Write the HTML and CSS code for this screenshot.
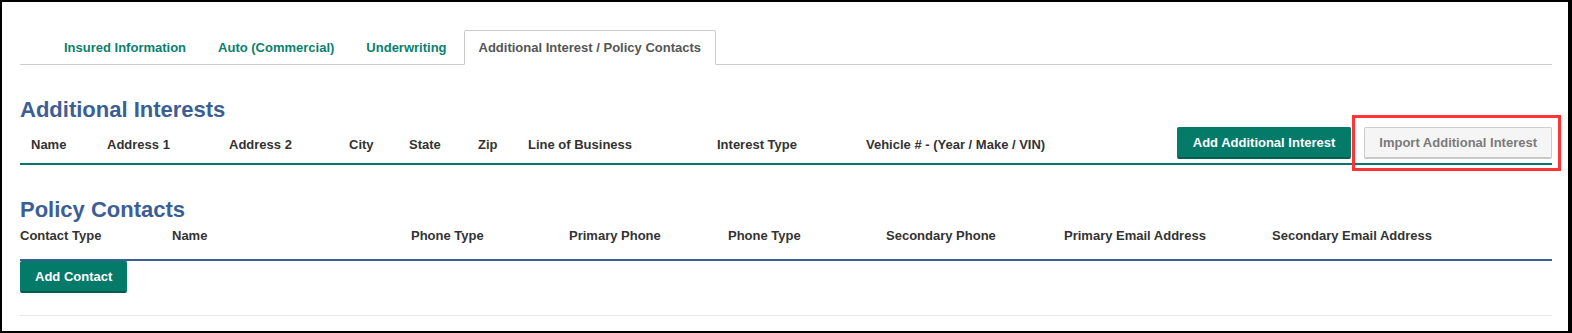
FILE: index.html
```html
<!DOCTYPE html>
<html>
<head>
<meta charset="utf-8">
<link rel="stylesheet" href="styles.css">
</head>
<body>
<div class="frame">
  <div class="tabs">
    <div class="tab">Insured Information</div>
    <div class="tab">Auto (Commercial)</div>
    <div class="tab">Underwriting</div>
    <div class="tab active">Additional Interest / Policy Contacts</div>
  </div>

  <h2 class="section-title">Additional Interests</h2>
  <div class="interest-row">
    <div class="interest-cols">
      <span>Name</span>
      <span>Address 1</span>
      <span>Address 2</span>
      <span>City</span>
      <span>State</span>
      <span>Zip</span>
      <span>Line of Business</span>
      <span>Interest Type</span>
      <span>Vehicle # - (Year / Make / VIN)</span>
    </div>
    <div class="actions">
      <button class="btn btn-green btn-add">Add Additional Interest</button>
      <button class="btn btn-light">Import Additional Interest</button>
    </div>
  </div>

  <h2 class="section-title contacts-title">Policy Contacts</h2>
  <div class="contact-row">
    <span>Contact Type</span>
    <span>Name</span>
    <span>Phone Type</span>
    <span>Primary Phone</span>
    <span>Phone Type</span>
    <span>Secondary Phone</span>
    <span>Primary Email Address</span>
    <span>Secondary Email Address</span>
  </div>
  <button class="btn btn-green btn-contact">Add Contact</button>
  <div class="bottom-rule"></div>

  <div class="highlight"></div>
</div>
</body>
</html>
```

FILE: styles.css
```css
html, body {
  margin: 0;
  padding: 0;
  background: #fff;
}

.frame {
  position: relative;
  box-sizing: border-box;
  width: 1572px;
  height: 333px;
  border-style: solid;
  border-color: #000;
  border-width: 2px 4px 2px 2px;
  padding: 0 16px 0 18px;
  font-family: "Liberation Sans", Arial, sans-serif;
  font-size: 13px;
  color: #333;
  overflow: hidden;
}

.tabs {
  display: flex;
  margin-top: 28px;
  padding-left: 29px;
  border-bottom: 1px solid #ccc;
}

.tab {
  padding: 8px 14px;
  line-height: 17px;
  border: 1px solid transparent;
  border-radius: 2px 2px 0 0;
  margin-right: 2px;
  margin-bottom: -1px;
  font-weight: bold;
  color: #0a7f6c;
}

.tab.active {
  color: #555;
  border-color: #ccc;
  border-bottom-color: #fff;
  background: #fff;
}

.section-title {
  margin: 33px 0 0 0;
  font-size: 22px;
  line-height: 24px;
  font-weight: bold;
  color: #3b5e96;
}

.interest-row {
  display: flex;
  align-items: center;
  justify-content: space-between;
  margin-top: 5px;
  padding-bottom: 4px;
  border-bottom: 2px solid #07776a;
}

.interest-cols {
  display: grid;
  grid-template-columns: 76px 122px 120px 60px 69px 50px 189px 149px auto;
  padding-left: 11px;
  padding-top: 3px;
  font-weight: bold;
  line-height: 18px;
}

.actions {
  display: flex;
  gap: 13px;
}

.btn {
  box-sizing: border-box;
  height: 32px;
  font-family: "Liberation Sans", Arial, sans-serif;
  font-size: 13px;
  font-weight: bold;
  white-space: nowrap;
  border-radius: 2px;
  cursor: pointer;
}

.btn-green {
  background: #047a68;
  color: #fff;
  border: 1px solid #047a68;
  border-bottom: 2px solid #035c4f;
  padding: 0 14px;
}

.btn-add {
  padding: 0 15px;
}

.btn-light {
  background: #f5f5f5;
  color: #7a7a7a;
  border: 1px solid #ccc;
  border-bottom: 2px solid #c8c8c8;
  padding: 0 14px;
}

.contacts-title {
  margin-top: 33px;
}

.contact-row {
  display: grid;
  grid-template-columns: 152px 239px 158px 159px 158px 178px 208px auto;
  margin-top: 5px;
  line-height: 18px;
  padding-bottom: 14px;
  border-bottom: 2px solid #3b5e96;
  font-weight: bold;
}

.btn-contact {
  display: block;
}

.bottom-rule {
  margin-top: 22px;
  border-top: 1px solid #e8e8e8;
}

.highlight {
  position: absolute;
  left: 1350px;
  top: 113px;
  width: 203px;
  height: 50px;
  border: 3px solid #ff3535;
}
```
